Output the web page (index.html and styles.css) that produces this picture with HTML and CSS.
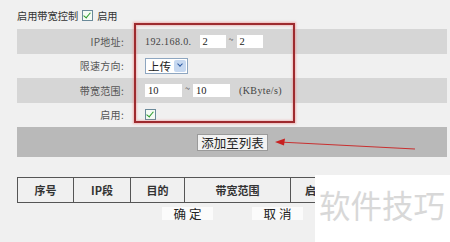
FILE: index.html
```html
<!DOCTYPE html>
<html lang="zh">
<head>
  <meta charset="UTF-8" />
  <title>带宽控制</title>
  <link rel="stylesheet" href="styles.css">
</head>
<body>

<div class="page">
  <div class="top-line">
    <span>启用带宽控制</span>
    <span class="check on"></span>
    <span>启用</span>
  </div>

  <!-- 规则表单 -->
  <div class="form">
    <div class="row gray">
      <div class="label">IP地址:</div>
      <div class="value">
        <span class="mono">192.168.0.</span>
        <span class="box ip">2</span>
        <span class="tilde">~</span>
        <span class="box ip">2</span>
      </div>
    </div>
    <div class="row">
      <div class="label">限速方向:</div>
      <div class="value">
        <span class="select">上传<span class="arrow"></span></span>
      </div>
    </div>
    <div class="row gray">
      <div class="label">带宽范围:</div>
      <div class="value">
        <span class="box bw">10</span>
        <span class="tilde">~</span>
        <span class="box bw">10</span>
        <span class="mono unit">(KByte/s)</span>
      </div>
    </div>
    <div class="row">
      <div class="label">启用:</div>
      <div class="value">
        <span class="check on"></span>
      </div>
    </div>
  </div>

  <div class="add-bar">
    <button class="add-btn">添加至列表</button>
  </div>

  <div class="table-clip">
    <table class="rules">
      <tr>
        <th class="c1">序号</th>
        <th class="c2">IP段</th>
        <th class="c3">目的</th>
        <th class="c4">带宽范围</th>
        <th class="c5">启用</th>
      </tr>
    </table>
  </div>

  <div class="actions">
    <button class="act">确 定</button>
    <button class="act">取 消</button>
  </div>

  <!-- 标注 -->
  <div class="mark-box"></div>
  <svg class="mark-arrow" width="150" height="16" viewBox="0 0 150 16">
    <line x1="4" y1="4" x2="140" y2="11" stroke="#c83030" stroke-width="1.2"/>
    <polygon points="0,4 10,0.5 9,7.5" fill="#c82020"/>
  </svg>
  <div class="watermark">软件技巧</div>
</div>

</body>
</html>
```

FILE: styles.css
```css
body {
  margin: 0;
  background-color: #f0f0f0;
  font-family: "Noto Sans CJK SC", "Liberation Sans", sans-serif;
  color: #333;
}

.page {
  position: relative;
  width: 450px;
  height: 242px;
  overflow: hidden;
  padding-left: 17px;
  box-sizing: border-box;
}

.top-line {
  height: 29px;
  display: flex;
  align-items: center;
  gap: 4px;
  font-size: 10.2px;
  color: #333;
  padding-top: 1px;
  box-sizing: border-box;
}

.check {
  display: inline-block;
  width: 9px;
  height: 9px;
  border: 1px solid #6a8a9a;
  background: #f4fbf4;
  position: relative;
}

.check.on::after {
  content: "";
  position: absolute;
  left: 2px;
  top: 0px;
  width: 3px;
  height: 6px;
  border-right: 1.6px solid #2a9a2a;
  border-bottom: 1.6px solid #2a9a2a;
  transform: rotate(40deg);
}

.form {
  width: 430px;
}

.row {
  height: 24.5px;
  display: flex;
  align-items: center;
}

.row.gray {
  background-color: #d6d6d6;
}

.label {
  width: 107px;
  text-align: right;
  font-size: 10px;
  color: #555;
  letter-spacing: 0.3px;
}

.value {
  padding-left: 21px;
  display: flex;
  align-items: center;
}

.mono {
  font-family: "Liberation Serif", serif;
  font-size: 10px;
  color: #444;
  letter-spacing: 0.4px;
}

.unit {
  margin-left: 9px;
}

.box {
  display: inline-block;
  height: 13px;
  line-height: 13px;
  background: #fff;
  font-family: "Liberation Serif", serif;
  font-size: 10.5px;
  color: #222;
  padding-left: 3px;
  box-sizing: border-box;
}

.box.ip {
  width: 26px;
}

.mono + .box.ip {
  margin-left: 8px;
}

.box.bw {
  width: 37px;
}

.tilde {
  font-size: 9px;
  color: #444;
  width: 11px;
  text-align: center;
  margin-top: -4px;
}

.select {
  display: inline-flex;
  align-items: center;
  width: 43px;
  height: 16px;
  border: 1px solid #8ea6c0;
  background: #fff;
  font-size: 11.5px;
  color: #222;
  padding-left: 2px;
  box-sizing: border-box;
  justify-content: space-between;
}

.arrow {
  width: 12px;
  height: 12px;
  margin-right: 1px;
  background: #c6d8f0;
  border-radius: 2px;
  position: relative;
}

.arrow::after {
  content: "";
  position: absolute;
  left: 3.5px;
  top: 2.5px;
  width: 3px;
  height: 3px;
  border-right: 1.6px solid #2d5aa0;
  border-bottom: 1.6px solid #2d5aa0;
  transform: rotate(45deg);
}

.add-bar {
  width: 430px;
  height: 30px;
  background-color: #b9b9b9;
  display: flex;
  align-items: center;
  padding-left: 180px;
  box-sizing: border-box;
}

.add-btn {
  width: 71px;
  height: 17px;
  padding: 0;
  border: 1px solid #9a9a9a;
  background: #f2f2f2;
  font-family: "Noto Sans CJK SC", sans-serif;
  font-size: 12.5px;
  line-height: 15px;
  color: #222;
}

.table-clip {
  margin-top: 20px;
  width: 298px;
  overflow: hidden;
}

.rules {
  border-collapse: collapse;
  table-layout: fixed;
  width: 319px;
  height: 26px;
}

.rules th {
  border: 1px solid #555;
  font-size: 11px;
  font-weight: bold;
  color: #333;
  padding: 0;
}

.rules .c1 { width: 55px; }
.rules .c2 { width: 56px; }
.rules .c3 { width: 53px; }
.rules .c4 { width: 105px; }
.rules .c5 { width: 50px; }

.actions {
  display: flex;
  gap: 39px;
  padding-left: 145px;
  margin-top: 4px;
}

.act {
  width: 51px;
  height: 13px;
  padding: 0;
  border: none;
  background: #fbfbfb;
  font-family: "Noto Sans CJK SC", sans-serif;
  font-size: 12.5px;
  line-height: 13px;
  color: #222;
}

.mark-box {
  position: absolute;
  left: 134px;
  top: 23px;
  width: 161px;
  height: 100px;
  border: 2.5px solid #9e2a2e;
  box-sizing: border-box;
  box-shadow: 0 0 2px 1px rgba(240, 120, 120, 0.5), inset 0 0 2px 1px rgba(240, 120, 120, 0.4);
}

.mark-arrow {
  position: absolute;
  left: 275px;
  top: 138px;
}

.watermark {
  position: absolute;
  left: 315px;
  top: 175px;
  width: 135px;
  height: 67px;
  background: #fff;
  color: #d8d8d8;
  font-size: 31.5px;
  line-height: 1;
  padding-top: 14px;
  padding-left: 4px;
  box-sizing: border-box;
  white-space: nowrap;
}
```
